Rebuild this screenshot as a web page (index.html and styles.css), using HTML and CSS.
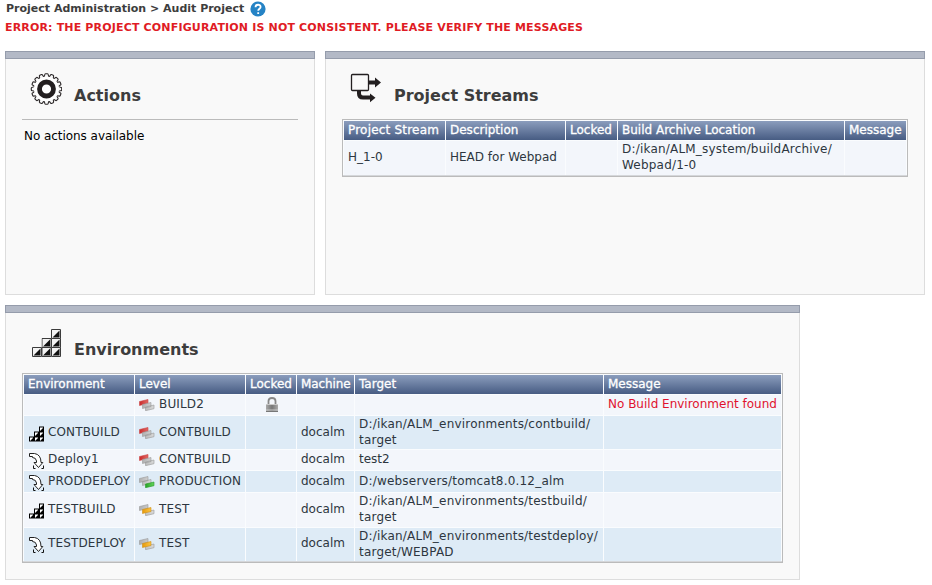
FILE: index.html
```html
<!DOCTYPE html>
<html lang="en">
<head>
<meta charset="utf-8">
<title>Audit Project</title>
<link rel="stylesheet" href="styles.css">
</head>
<body>
<svg class="defs" width="0" height="0" aria-hidden="true">
  <defs>
    <linearGradient id="red" x1="0" x2="1" y1="0" y2="0"><stop offset="0" stop-color="#c92a2a"/><stop offset="1" stop-color="#e06a66"/></linearGradient>
    <linearGradient id="grey" x1="0" x2="1" y1="0" y2="0"><stop offset="0" stop-color="#b0b0b0"/><stop offset="1" stop-color="#dadada"/></linearGradient>
    <linearGradient id="green" x1="0" x2="1" y1="0" y2="0"><stop offset="0" stop-color="#28a428"/><stop offset="1" stop-color="#66d35c"/></linearGradient>
    <linearGradient id="amber" x1="0" x2="1" y1="0" y2="0"><stop offset="0" stop-color="#e69a0c"/><stop offset="1" stop-color="#fcc544"/></linearGradient>
    <linearGradient id="steel" x1="0" x2="1" y1="0" y2="0"><stop offset="0" stop-color="#aaa"/><stop offset=".5" stop-color="#777"/><stop offset="1" stop-color="#aaa"/></linearGradient>
    <path id="tooth" d="M-2.520-12.650C-1.200-12.900-2.400-15.200-1-15.200H1C2.400-15.200 1.200-12.900 2.520-12.650"/>
    <g id="teeth"><use href="#tooth"/><use href="#tooth" transform="rotate(22.500)"/><use href="#tooth" transform="rotate(45)"/><use href="#tooth" transform="rotate(67.500)"/></g>
    <symbol id="block" viewBox="0 0 10 10"><path d="M.5.5h9v9h-9z" fill="#f4f4f4" stroke="#3c3c3c"/><path d="M8.500 1.500v7h-7z" fill="#111"/></symbol>
    <symbol id="build" viewBox="0 0 15 15">
      <path d="M10 0h5v15H0v-5h5V5h5z"/>
      <path d="M11 1h3v1h-1v1h-1v1h-1zM6 6h3v1H8v1H7v1H6zM11 6h3v1h-1v1h-1v1h-1zM1 11h3v1H3v1H2v1H1zM6 11h3v1H8v1H7v1H6zM11 11h3v1h-1v1h-1v1h-1z" fill="#fff"/>
    </symbol>
    <symbol id="deploy" viewBox="0 0 15 16">
      <path d="M.5.5H5.500Q12 1.500 12 9.500H13.800L9.500 14.500 5 9.500H7.500V8Q7 4.500 3.500 4.500V3.500H.5Z" fill="#fff" stroke="#222"/>
      <path d="M4.500 12.500v3H6.500M14.500 12.500v3H12.500" fill="none" stroke="#111"/>
    </symbol>
    <symbol id="level-red" viewBox="0 0 16 12">
      <path d="M.5 2.500 9 .5V4.500L.5 6.500Z" fill="url(#red)" stroke="#c44" stroke-width=".6"/>
      <path d="M3.500 5.500 12 3.500V7.500L3.500 9.500ZM6.500 8 15 6V9.700L6.500 11.700Z" fill="url(#grey)" stroke="#999" stroke-width=".6"/>
    </symbol>
    <symbol id="level-green" viewBox="0 0 16 12">
      <path d="M.5 2.500 9 .5V4.500L.5 6.500ZM3.500 5.500 12 3.500V7.500L3.500 9.500Z" fill="url(#grey)" stroke="#999" stroke-width=".6"/>
      <path d="M6.500 8 15 6V9.700L6.500 11.700Z" fill="url(#green)" stroke="#299829" stroke-width=".6"/>
    </symbol>
    <symbol id="level-amber" viewBox="0 0 16 12">
      <path d="M.5 2.500 9 .5V4.500L.5 6.500ZM6.500 8 15 6V9.700L6.500 11.700Z" fill="url(#grey)" stroke="#999" stroke-width=".6"/>
      <path d="M3.500 5.500 12 3.500V7.500L3.500 9.500Z" fill="url(#amber)" stroke="#cf8f18" stroke-width=".6"/>
    </symbol>
  </defs>
</svg>

<header class="crumbs">
  <span>Project Administration &gt; Audit Project</span>
  <svg class="help" viewBox="0 0 16 16"><circle cx="8" cy="8" r="7.600" fill="#2583c5"/><path d="M5.500 6.200C5.500 2.900 10.600 3 10.600 6 10.600 7.800 8.200 7.700 8.200 9.800M8.200 11.200v1.900" fill="none" stroke="#fff" stroke-width="1.800"/></svg>
</header>
<p class="error">ERROR: THE PROJECT CONFIGURATION IS NOT CONSISTENT. PLEASE VERIFY THE MESSAGES</p>

<main>
  <div class="row">
    <section class="panel actions">
      <div class="title">
        <svg class="icon" viewBox="0 0 32 32"><g transform="translate(16.500 16)" fill="none" stroke="#2a2627" stroke-width="1.100"><use href="#teeth"/><use href="#teeth" transform="rotate(90)"/><use href="#teeth" transform="rotate(180)"/><use href="#teeth" transform="rotate(270)"/></g><circle cx="16.500" cy="16" r="12" fill="#fff"/><circle cx="16.500" cy="16" r="7" fill="#fff" stroke="#231f20" stroke-width="4.800"/></svg>
        <h2>Actions</h2>
      </div>
      <p class="none">No actions available</p>
    </section>

    <section class="panel streams">
      <div class="title">
        <svg class="icon" viewBox="0 0 32 32"><path d="M9 17v3.500q0 4 4 4H20" fill="none" stroke="#231f20" stroke-width="4"/><path d="M20 20.500 25.500 24.800 20 29.200ZM25 4.500 31 9.500 25 14.500Z" fill="#231f20"/><path d="M17 9.500h9" stroke="#231f20" stroke-width="4"/><rect x="1.500" y="1.500" width="17" height="16" rx="1" fill="#f9f9f9" stroke="#231f20" stroke-width="1.300"/></svg>
        <h2>Project Streams</h2>
      </div>
      <table>
        <colgroup><col class="w101"><col class="w119"><col class="w51"><col class="w226"><col class="w61"></colgroup>
        <thead><tr><th class="path">Project Stream</th><th>Description</th><th>Locked</th><th>Build Archive Location</th><th>Message</th></tr></thead>
        <tbody><tr class="tall"><td>H_1-0</td><td>HEAD for Webpad</td><td></td><td class="path">D:/ikan/ALM_system/buildArchive/<br>Webpad/1-0</td><td></td></tr></tbody>
      </table>
    </section>
  </div>

  <section class="panel envs">
    <div class="title">
      <svg class="icon" viewBox="0 0 32 32"><use href="#block" x="21" y="2" width="10" height="10"/><use href="#block" x="11.500" y="11" width="10" height="10"/><use href="#block" x="21" y="11" width="10" height="10"/><use href="#block" x="2" y="20" width="10" height="10"/><use href="#block" x="11.500" y="20" width="10" height="10"/><use href="#block" x="21" y="20" width="10" height="10"/></svg>
      <h2>Environments</h2>
    </div>
    <table>
      <colgroup><col class="w110"><col class="w110"><col class="w50"><col class="w57"><col class="w248"><col class="w177"></colgroup>
      <thead><tr><th>Environment</th><th>Level</th><th>Locked</th><th class="machine">Machine</th><th>Target</th><th>Message</th></tr></thead>
      <tbody>
        <tr><td></td><td><div class="item lv"><svg><use href="#level-red"/></svg>BUILD2</div></td>
          <td><svg class="lock" viewBox="0 0 12 15"><path d="M2.500 8V4Q2.500 1 6 1t3.500 3V8" fill="none" stroke="#888" stroke-width="1.800"/><path d="M0 7h12v7.500H0z" fill="url(#steel)"/><path d="M0 7.500h12M0 13h12" stroke="#c8c8c8"/><path d="M0 14.500h12" stroke="#777"/></svg></td>
          <td></td><td></td><td class="bad">No Build Environment found</td></tr>
        <tr class="tall alt"><td><div class="item"><svg><use href="#build"/></svg>CONTBUILD</div></td><td><div class="item lv"><svg><use href="#level-red"/></svg>CONTBUILD</div></td><td></td><td>docalm</td><td class="path">D:/ikan/ALM_environments/contbuild/<br>target</td><td></td></tr>
        <tr><td><div class="item"><svg><use href="#deploy"/></svg>Deploy1</div></td><td><div class="item lv"><svg><use href="#level-red"/></svg>CONTBUILD</div></td><td></td><td>docalm</td><td>test2</td><td></td></tr>
        <tr class="alt"><td><div class="item"><svg><use href="#deploy"/></svg>PRODDEPLOY</div></td><td><div class="item lv"><svg><use href="#level-green"/></svg>PRODUCTION</div></td><td></td><td>docalm</td><td class="path">D:/webservers/tomcat8.0.12_alm</td><td></td></tr>
        <tr class="taller"><td><div class="item"><svg><use href="#build"/></svg>TESTBUILD</div></td><td><div class="item lv"><svg><use href="#level-amber"/></svg>TEST</div></td><td></td><td>docalm</td><td class="path">D:/ikan/ALM_environments/testbuild/<br>target</td><td></td></tr>
        <tr class="tall alt last"><td><div class="item"><svg><use href="#deploy"/></svg>TESTDEPLOY</div></td><td><div class="item lv"><svg><use href="#level-amber"/></svg>TEST</div></td><td></td><td>docalm</td><td class="path">D:/ikan/ALM_environments/testdeploy/<br>target/WEBPAD</td><td></td></tr>
      </tbody>
    </table>
  </section>
</main>
</body>
</html>
```

FILE: styles.css
```css
*, *::before { box-sizing: border-box; }
body {
  margin: 0;
  height: 585px;
  overflow: hidden;
  background: #fff;
  color: #2d3640;
  font: 12px/16px "DejaVu Sans", sans-serif;
}
.defs { position: absolute; }
.crumbs {
  display: flex;
  align-items: center;
  gap: 6px;
  height: 18px;
  padding-left: 6px;
  color: #3d3d3d;
  font: bold 11px/18px "DejaVu Sans", sans-serif;
}
.help { width: 16px; height: 16px; }
.error {
  margin: 0 0 0 5px;
  padding-top: 1px;
  height: 33px;
  color: #e01b24;
  font: bold 11px/18px "DejaVu Sans", sans-serif;
  letter-spacing: 0.165px;
  white-space: nowrap;
}
main { display: flex; flex-direction: column; gap: 10px; padding-left: 5px; }
.row { display: flex; gap: 10px; }
.panel { padding: 0 16px; background: #f9f9f9; border: 1px solid #ddd; border-top: 0; }
.panel::before {
  content: "";
  display: block;
  height: 8px;
  margin: 0 -17px;
  background: #b3b9c6;
  border: 1px solid #959cab;
}
.actions { width: 310px; height: 244px; }
.streams { width: 600px; height: 244px; }
.envs { width: 795px; height: 275px; }
.title { display: flex; height: 60px; padding: 14px 0 0 8px; gap: 12px; }
.icon { width: 32px; height: 32px; flex: none; }
h2 {
  margin: 11px 0 0;
  color: #3d3d3d;
  font: bold 16px/24px "DejaVu Sans", sans-serif;
}
.none { margin: 0; padding: 8px 2px; border-top: 1px solid #bbb; color: #000; letter-spacing: -0.05px; }
table {
  table-layout: fixed;
  border-collapse: separate;
  border-spacing: 1px;
  background: #fafcfe;
  border: 1px solid #bbb;
  box-shadow: inset 0 -1px #d5d7da;
}
.streams table { width: 566px; height: 58px; }
.envs table { width: 761px; height: 190px; }
th, td { padding: 0 4px; text-align: left; vertical-align: middle; white-space: nowrap; }
th {
  height: 19px;
  background: linear-gradient(#8b9dbd, #475c83);
  color: #fff;
  font-weight: 400;
  line-height: 17px;
  -webkit-text-stroke: 0.3px #fff;
}
th.machine { letter-spacing: -0.1px; }
td { height: 20px; padding-bottom: 2px; background: #f3f6fb; }
.path { letter-spacing: 0.2px; }
.tall td { height: 33px; padding-bottom: 1px; }
.streams .tall td { padding-bottom: 2px; }
.tall.last td:not(.path) { padding-bottom: 3px; }
.taller td { height: 34px; }
.alt td { background: #deebf6; }
td.bad { color: #e0122e; }
.item { display: flex; align-items: center; height: 16px; gap: 4px; padding-left: 1px; letter-spacing: 0.15px; }
.item svg { flex: none; width: 15px; height: 16px; position: relative; top: 2px; }
.item.lv { gap: 5px; padding-left: 0; }
.item.lv svg { width: 16px; height: 12px; top: 1px; margin-right: -1px; }
.lock { display: block; width: 12px; height: 15px; margin: 1px auto 0 16px; }
.w101 { width: 101px; } .w119 { width: 119px; } .w51 { width: 51px; } .w226 { width: 226px; } .w61 { width: 61px; }
.w110 { width: 110px; } .w50 { width: 50px; } .w57 { width: 57px; } .w248 { width: 248px; } .w177 { width: 177px; }
```
